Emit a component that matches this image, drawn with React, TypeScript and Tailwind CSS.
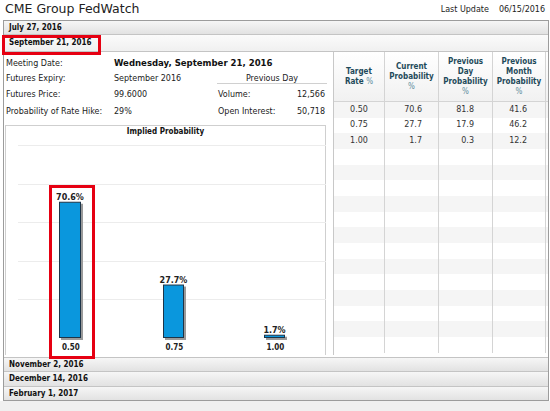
import React from "react";

const font = { fontFamily: '"DejaVu Sans", Verdana, sans-serif' };
const cond = { fontFamily: '"DejaVu Sans Condensed", "DejaVu Sans", Verdana, sans-serif', fontStretch: "condensed" as const };

function HeaderRow({ label, className = "" }: { label: string; className?: string }) {
  return (
    <div
      className={`flex items-center pl-[5px] text-[8px] font-bold text-[#111] bg-gradient-to-b from-[#f6f6f6] to-[#e2e2e2] border-[#c4c4c4] ${className}`}
      style={cond}
    >
      {label}
    </div>
  );
}

const rows = [
  ["0.50", "70.6", "81.8", "41.6"],
  ["0.75", "27.7", "17.9", "46.2"],
  ["1.00", "1.7", "0.3", "12.2"],
];

function Chart() {
  const bars = [
    { x: 53, w: 22, v: 70.6, label: "0.50" },
    { x: 157, w: 21, v: 27.7, label: "0.75" },
    { x: 258, w: 21, v: 1.7, label: "1.00" },
  ];
  const base = 201;
  const scale = 1.93;
  return (
    <svg width="320" height="217" className="block">
      {[8, 47, 85, 124, 162].map((y) => (
        <line key={y} x1="12" x2="320" y1={y + 0.5} y2={y + 0.5} stroke="#ececec" strokeWidth="1" />
      ))}
      {bars.map((b) => {
        const h = b.v * scale;
        const top = base - h;
        const cx = b.x + b.w / 2;
        return (
          <g key={b.label}>
            <rect x={b.x + 2} y={top + 2} width={b.w} height={h} fill="#9a9a9a" />
            <rect x={b.x + 0.5} y={top + 0.5} width={b.w - 1} height={h - 1} fill="#0a97dd" stroke="#1d3448" strokeWidth="1" />
            <text x={cx} y={top - 2} textAnchor="middle" fontSize="8" fontWeight="bold" fill="#222" style={font}>
              {b.v}%
            </text>
            <text x={cx + 1} y={213} textAnchor="middle" fontSize="8" fontWeight="bold" fill="#222" style={cond}>
              {b.label}
            </text>
          </g>
        );
      })}
    </svg>
  );
}

export default function App() {
  return (
    <div className="w-[550px] h-[411px] bg-white overflow-hidden relative text-[#222]" style={font}>
      <div className="h-[20px] flex items-start justify-between pl-[5px] pr-[5px]">
        <div className="text-[12.5px] leading-[18px] text-[#222]">CME Group FedWatch</div>
        <div className="flex gap-[10px] text-[8px] leading-[10px] mt-[5px] text-[#222]">
          <span>Last Update</span>
          <span>06/15/2016</span>
        </div>
      </div>

      <div className="relative ml-[3px] w-[546px] border border-[#9c9c9c]">
        <HeaderRow label="July 27, 2016" className="h-[14px] border-b" />
        <HeaderRow label="September 21, 2016" className="h-[17px] border-b from-[#fbfbfb] to-[#f0f0f0]" />

        <div className="flex h-[303px]">
          {/* Left panel */}
          <div className="w-[329px] flex flex-col">
            <div className="pt-[4px] text-[8px] text-[#222] h-[73px]">
              <div className="flex h-[15px] items-center">
                <div className="w-[110px] pl-[2px]">Meeting Date:</div>
                <div className="text-[9.5px] font-bold text-[#111]" style={cond}>Wednesday, September 21, 2016</div>
              </div>
              <div className="flex h-[15px] items-start">
                <div className="w-[110px] pl-[2px] mt-[2px]">Futures Expiry:</div>
                <div className="w-[103px] mt-[2px]">September 2016</div>
                <div className="w-[110px] h-[13px] border-b border-[#d0d0d0] text-center pt-[2px]">Previous Day</div>
              </div>
              <div className="flex h-[17px] items-center">
                <div className="w-[110px] pl-[2px]">Futures Price:</div>
                <div className="w-[103px]">99.6000</div>
                <div className="w-[108px] flex justify-between pl-[1px]">
                  <span>Volume:</span>
                  <span>12,566</span>
                </div>
              </div>
              <div className="flex h-[17px] items-center">
                <div className="w-[110px] pl-[2px]">Probability of Rate Hike:</div>
                <div className="w-[103px]">29%</div>
                <div className="w-[108px] flex justify-between pl-[1px]">
                  <span>Open Interest:</span>
                  <span>50,718</span>
                </div>
              </div>
            </div>
            <div className="ml-[1px] w-[321px] flex-1 border border-[#cfcfcf] border-b-0 flex flex-col">
              <div className="h-[11px] text-center text-[8px] font-bold leading-[11px] text-[#111]" style={cond}>Implied Probability</div>
              <Chart />
            </div>
          </div>

          {/* Right table */}
          <div className="w-[215px] border-l border-[#c8c8c8] flex flex-col text-[8px]">
            <div
              className="flex h-[50px] border-b border-[#d4d4d4] bg-gradient-to-b from-white to-[#f1f1f1] text-[#1e4a5a] font-bold leading-[10px]"
              style={cond}
            >
              <div className="w-[51px] border-r border-[#d4d4d4] flex flex-col items-center justify-center text-center">
                <span>Target</span>
                <span>
                  Rate <span className="font-normal text-[#5f8f9f]">%</span>
                </span>
              </div>
              <div className="w-[54px] border-r border-[#d4d4d4] flex flex-col items-center justify-center text-center">
                <span>Current</span>
                <span>Probability</span>
                <span className="font-normal text-[#5f8f9f]">%</span>
              </div>
              <div className="w-[54px] border-r border-[#d4d4d4] flex flex-col items-center justify-center text-center">
                <span>Previous</span>
                <span>Day</span>
                <span>Probability</span>
                <span className="font-normal text-[#5f8f9f]">%</span>
              </div>
              <div className="w-[53px] border-r border-[#d4d4d4] flex flex-col items-center justify-center text-center">
                <span>Previous</span>
                <span>Month</span>
                <span>Probability</span>
                <span className="font-normal text-[#5f8f9f]">%</span>
              </div>
            </div>
            <div className="flex-1 flex flex-col overflow-hidden">
              {Array.from({ length: 16 }).map((_, i) => {
                const r = rows[i];
                return (
                  <div
                    key={i}
                    className={`flex h-[15.67px] shrink-0 items-center text-[#333] ${i % 2 === 0 ? "bg-[#f5f5f5]" : "bg-white"}`}
                  >
                    <div className="w-[51px] h-full border-r border-[#d4d4d4] flex items-center justify-center">{r ? r[0] : ""}</div>
                    <div className="w-[54px] h-full border-r border-[#d4d4d4] flex items-center justify-end pr-[16px]">{r ? r[1] : ""}</div>
                    <div className="w-[54px] h-full border-r border-[#d4d4d4] flex items-center justify-end pr-[18px]">{r ? r[2] : ""}</div>
                    <div className="w-[53px] h-full border-r border-[#d4d4d4] flex items-center justify-end pr-[18px]">{r ? r[3] : ""}</div>
                  </div>
                );
              })}
            </div>
          </div>
        </div>

        <div className="h-[2px]" />
        <HeaderRow label="November 2, 2016" className="h-[14px] border-t" />
        <HeaderRow label="December 14, 2016" className="h-[15px] border-t" />
        <HeaderRow label="February 1, 2017" className="h-[14px] border-t" />

        {/* Highlight boxes */}
        <div className="absolute left-[-2px] top-[14px] w-[99px] h-[20px] border-[3px] border-[#e60012] pointer-events-none" />
        <div className="absolute left-[45px] top-[164px] w-[46px] h-[174px] border-[3px] border-[#e60012] pointer-events-none" />
      </div>
      <div className="absolute left-0 right-0 bottom-0 h-[10px] bg-[#f0f0f0]" />
    </div>
  );
}
